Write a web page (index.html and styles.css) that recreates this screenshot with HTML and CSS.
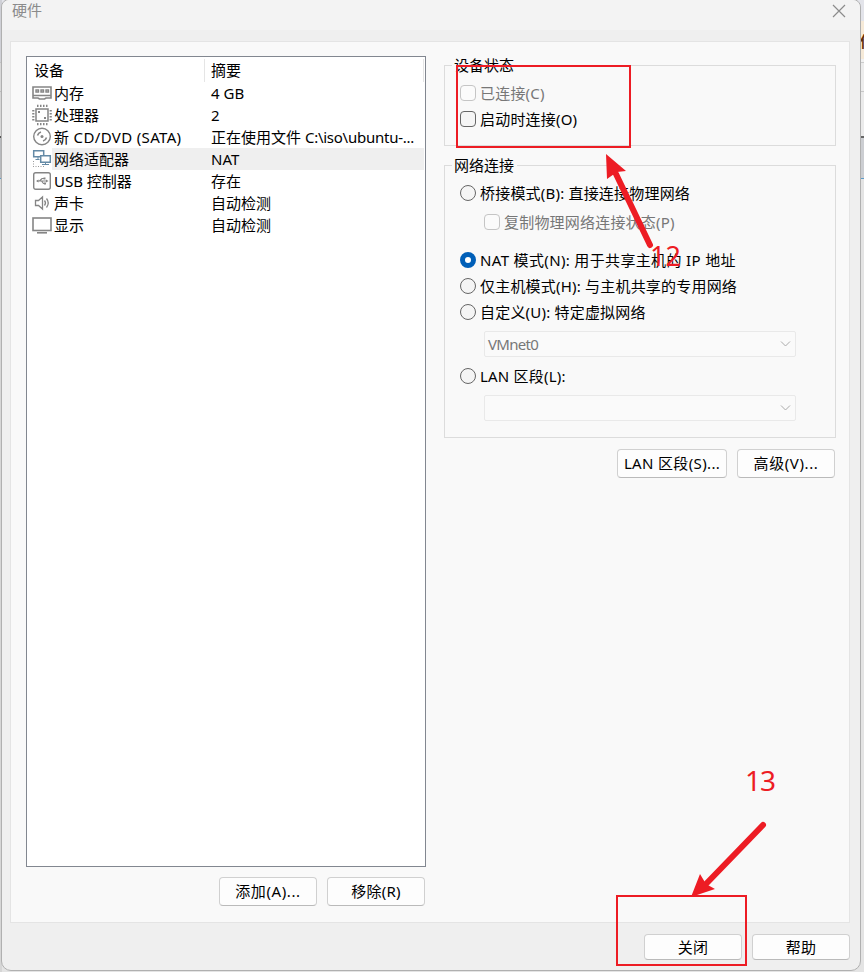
FILE: index.html
```html
<!DOCTYPE html>
<html lang="zh-CN">
<head>
<meta charset="utf-8">
<title>硬件</title>
<link rel="stylesheet" href="styles.css">
</head>
<body>
<div class="desktop">
<div class="backdrop"><span class="peek">你</span></div>
<main class="window">
  <header class="titlebar">
    <h1>硬件</h1>
    <svg class="close" width="14" height="14" viewBox="0 0 14 14"><path d="M1 1l12 12M13 1L1 13"/></svg>
  </header>
  <div class="panel">
    <section class="left">
      <div class="list">
        <div class="row head"><span class="name">设备</span><span class="val">摘要</span></div>
        <div class="row"><svg class="ico" viewBox="0 0 20 22"><path d="M1 5h18v11h-5l-1.500 1h-5L6 16H1zM1 13.500h18" stroke-width="1.6"/><path d="M4 8h2.500v2H4zM9 8h2.500v2H9zM14 8h2.500v2H14z" stroke-width="1.400"/></svg><span class="name">内存</span><span class="val">4 GB</span></div>
        <div class="row"><svg class="ico" viewBox="0 0 20 22"><rect x="4" y="5" width="12" height="12" stroke-width="1.500"/><path d="M5 1.800h11M5 20.200h11M1.300 6v11M18.700 6v11" stroke-width="2.200" stroke-dasharray="1.500 1.500"/><path d="M6 7h2v2H6zM12 13h2v2h-2z" class="fill"/></svg><span class="name">处理器</span><span class="val">2</span></div>
        <div class="row"><svg class="ico" viewBox="0 0 20 22"><circle cx="10" cy="10.500" r="8.300" stroke-width="1.400"/><circle cx="10" cy="10.500" r="1.500" class="fill"/><path d="M5.500 9.500a5 5 0 0 1 3.500-3.500M14.500 11.500a5 5 0 0 1-3.500 3.500" stroke-width="1.600"/></svg><span class="name spread">新 CD/DVD (SATA)</span><span class="val">正在使用文件 <span class="path">C:\iso\ubuntu-...</span></span></div>
        <div class="row selected"><svg class="ico net" viewBox="0 0 20 22"><path d="M1.700 2.700h10v6h-10z" stroke-width="1.500"/><path d="M3.500 11.500h4M6 9v2"/><path d="M8.700 7.700h9.600v6.500H8.700z" fill="#fff" stroke-width="1.500"/><path d="M10 16.500h7M13.500 14v2"/><path class="dots" d="M1.500 13v6M1 18.500h11"/></svg><span class="name">网络适配器</span><span class="val">NAT</span></div>
        <div class="row"><svg class="ico" viewBox="0 0 20 22"><rect x="1.700" y="2.700" width="16.600" height="16.600" rx="2" stroke-width="1.400"/><path d="M5 11h10M7.500 11l2.500-2.500h2M9.500 11l2 2.500h1.500" stroke-width="1.200"/><path d="M4 11l2.500-1.500v3zM14 9.500l2.500 1.500-2.500 1.500zM11.500 7.500h2v2h-2zM12 12.500h2v2h-2z" class="fill"/></svg><span class="name">USB 控制器</span><span class="val">存在</span></div>
        <div class="row"><svg class="ico" viewBox="0 0 20 22"><path d="M3.500 8.500h3L10.500 5v12l-4-3.500h-3zM12.500 8.500q2 2.500 0 5M14.500 6.500q3.500 4.500 0 9" stroke-width="1.300"/></svg><span class="name">声卡</span><span class="val">自动检测</span></div>
        <div class="row"><svg class="ico" viewBox="0 0 20 22"><rect x="1" y="4" width="18" height="12.500" stroke-width="1.600"/><path d="M5 18.800h10" stroke-width="1.600"/></svg><span class="name">显示</span><span class="val">自动检测</span></div>
      </div>
      <div class="actions"><button class="loose">添加(A)...</button><button>移除(R)</button></div>
    </section>
    <section class="right">
      <fieldset class="status">
        <legend>设备状态</legend>
        <label class="option off"><i class="box"></i>已连接(C)</label>
        <label class="option"><i class="box"></i>启动时连接(O)</label>
      </fieldset>
      <fieldset class="network">
        <legend>网络连接</legend>
        <label class="option"><i class="radio"></i>桥接模式(B): 直接连接物理网络</label>
        <label class="option off sub"><i class="box"></i>复制物理网络连接状态(P)</label>
        <label class="option spread"><i class="radio on"></i>NAT 模式(N): 用于共享主机的 IP 地址</label>
        <label class="option"><i class="radio"></i>仅主机模式(H): 与主机共享的专用网络</label>
        <label class="option"><i class="radio"></i>自定义(U): 特定虚拟网络</label>
        <div class="select"><span class="tight">VMnet0</span><svg width="11" height="6" viewBox="0 0 11 6"><path d="M1 .5l4.500 4.500L10 .5"/></svg></div>
        <label class="option"><i class="radio"></i>LAN 区段(L):</label>
        <div class="select"><svg width="11" height="6" viewBox="0 0 11 6"><path d="M1 .5l4.500 4.500L10 .5"/></svg></div>
      </fieldset>
      <div class="actions"><button class="wide spread">LAN 区段(S)...</button><button class="loose">高级(V)...</button></div>
    </section>
  </div>
  <footer><button>关闭</button><button>帮助</button></footer>
</main>
<svg class="notes" width="864" height="972" viewBox="0 0 864 972">
  <rect x="457" y="66" width="173" height="81"/>
  <rect x="617" y="896" width="129" height="69"/>
  <path class="shaft" d="M650 245L616 174M763 825L704 886"/>
  <path class="tip" d="M606 154L626 171 617 172 607 179zM691 897L700 874 706 884 715 889z"/>
  <text x="650" y="266" font-size="27" textLength="31">12</text>
  <text x="745" y="791" font-size="28" textLength="31">13</text>
</svg>
</div>
</body>
</html>
```
FILE: styles.css
```css
* { box-sizing: border-box; }
body { margin: 0; font: 15px/22px "Noto Sans", "Noto Sans CJK SC", sans-serif; color: #000; }
.desktop { position: relative; width: 864px; height: 972px; overflow: hidden; background: #e0e0e0; }
.backdrop {
  position: absolute; inset: 0; overflow: hidden;
  background:
    linear-gradient(#cfd0d6 0 62px, #c2c2c2 62px 63px, #d8d8d8 63px 91px, #bbb 91px 92px, #d6d6d6 92px 136px, #555 136px 138px, #b8babd 138px 178px, #5b9cc9 178px 179px, #d6d6d6 179px) 0 0 / 2px 100% no-repeat,
    linear-gradient(#e3e4ea 0 21px, #f6ead8 21px 59px, #f1f1f1 59px 62px, #ccc 62px 63px, #ececec 63px 91px, #c8c8c8 91px 92px, #ebebeb 92px 136px, #666 136px 138px, #ccced2 138px 178px, #5b9cc9 178px 179px, #e4e4e4 179px);
}
.peek { position: absolute; left: 860px; top: 30px; color: #633009; font-weight: bold; }
.window {
  position: relative; display: flex; flex-direction: column;
  width: 860px; height: 972px; margin-left: 1px; margin-top: -1px;
  border: 1px solid #b0b0b0; border-radius: 8px 8px 10px 10px; background: #efefef;
}
.titlebar { display: flex; justify-content: space-between; height: 30px; padding: 0 14px 0 10px; background: #f3f3f3; border-radius: 8px 8px 0 0; }
h1 { margin: -1px 0 0; font-size: 15px; font-weight: 400; line-height: 22px; color: #8b8b8b; }
.close { margin-top: 4px; fill: none; stroke: #8b8b8b; stroke-width: 1.2; }
.panel { display: flex; gap: 18px; height: 882px; margin: 11px 10px 0 8px; padding: 14px 13px 0 15px; border: 1px solid #e4e4e4; background: #f9f9f9; }
.left { width: 400px; }
.list { height: 811px; padding: 3px 1px 0 5px; border: 1px solid #828790; background: #fff; }
.row { display: flex; height: 22px; line-height: 22px; white-space: pre; }
.ico { width: 20px; height: 22px; fill: none; stroke: #858585; stroke-width: 1; }
.ico .fill { fill: #858585; stroke: none; }
.ico.net { stroke: #648aa6; }
.ico .dots { stroke: #999; stroke-dasharray: 1 1.500; }
.row .name { width: 153px; padding-left: 2px; }
.row .val { flex: 1; padding-left: 6px; }
.row.selected .name, .row.selected .val { background: #efefef; }
.row.head { height: 22px; margin-top: -1px; margin-bottom: 1px; }
.head .name { width: 173px; height: 23px; padding-left: 2px; border-right: 1px solid #e5e5e5; }
.head .val { height: 23px; border-right: 1px solid #e5e5e5; }
.actions { display: flex; justify-content: flex-end; gap: 10px; padding: 10px 1px 0 0; }
button {
  width: 98px; height: 29px; padding: 0 0 2px; border: 1px solid #d0d0d0; border-bottom-color: #bababa; border-radius: 4px;
  background: #fdfdfd; font: inherit; line-height: 22px; letter-spacing: .2px; color: #000; white-space: nowrap;
}
.right { width: 392px; padding-top: 9px; }
fieldset { position: relative; min-width: 0; margin: 0; padding: 0 0 0 15px; border: 1px solid #dcdcdc; }
legend { position: absolute; left: 7px; top: -12px; padding: 0 3px 0 2px; background: #f9f9f9; line-height: 22px; }
.status { height: 81px; padding-top: 14px; }
.network { height: 273px; margin-top: 19px; padding-top: 14px; }
.option { display: flex; align-items: center; gap: 4px; height: 26px; letter-spacing: .2px; white-space: pre; }
.spread { letter-spacing: .35px; }
.loose { letter-spacing: .6px; }
.tight { letter-spacing: -.7px; }
.path { letter-spacing: -.25px; }
.off { color: #777; }
.box, .radio { flex: none; width: 16px; height: 16px; border: 1px solid #666; border-radius: 4px; background: #f5f5f5; }
.off .box { border-color: #c5c5c5; background: #fbfbfb; }
.radio { border-radius: 50%; }
.radio.on { border: 5px solid #005fb8; background: #fff; }
.sub { height: 32px; margin: 0 0 9px 24px; }
.select { display: flex; align-items: center; justify-content: space-between; width: 312px; height: 26px; margin: 6px 0 6px 24px; padding: 0 4px 0 3px; border: 1px solid #e9e9e9; border-radius: 2px; background: #fafafa; color: #777; }
.select svg { margin-left: auto; fill: none; stroke: #aaa; }
.right .actions { padding-top: 11px; }
.wide { width: 110px; }
footer { display: flex; justify-content: flex-end; gap: 10px; padding: 11px 10px 0 0; }
footer button { height: 26px; padding-bottom: 1px; }
.notes { position: absolute; left: 0; top: 0; fill: none; stroke: #ed1c24; stroke-width: 2; }
.notes .shaft { stroke-width: 6; stroke-linecap: round; }
.notes .tip, .notes text { fill: #ed1c24; stroke: none; }
```
